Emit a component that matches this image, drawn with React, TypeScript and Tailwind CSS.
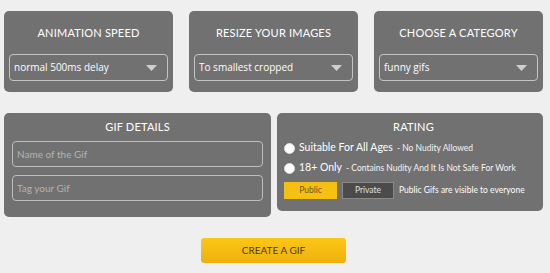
import React from 'react';

const font = { fontFamily: 'Lato, "Open Sans", sans-serif' };

function SelectBox({ value }: { value: string }) {
  return (
    <div className="flex h-[27px] items-center justify-between rounded-[4px] border border-[#c4c4c4] pl-[4px] pr-[10px]">
      <span className="text-[10px] text-white" style={{ fontFamily: '"Open Sans", sans-serif' }}>{value}</span>
      <svg width="11" height="6" viewBox="0 0 11 6">
        <polygon points="0,0 11,0 5.5,6" fill="#cfcfcf" />
      </svg>
    </div>
  );
}

function OptionPanel({ title, value }: { title: string; value: string }) {
  return (
    <div className="flex h-[81px] w-[169px] flex-col rounded-[5px] bg-[#717171] px-[5px] pt-[15px]">
      <h2 className="mb-[14px] text-center text-[11px] leading-[14px] tracking-[0.2px] text-white">{title}</h2>
      <SelectBox value={value} />
    </div>
  );
}

function RadioRow({ label, note }: { label: string; note: string }) {
  return (
    <div className="flex h-[14px] items-center gap-[4px]">
      <span className="h-[11px] w-[11px] rounded-full border border-[#ddd] bg-white" />
      <span className="text-[10.5px] text-white">{label}</span>
      <span className="text-[8.5px] text-[#f4f4f4]">- {note}</span>
    </div>
  );
}

export default function App() {
  return (
    <div className="min-h-[273px] bg-[#efefef] pt-[11px] pl-[4px]" style={font}>
      <div className="flex w-[539px] flex-col">
        <div className="flex gap-[16px]">
          <OptionPanel title="ANIMATION SPEED" value="normal 500ms delay" />
          <OptionPanel title="RESIZE YOUR IMAGES" value="To smallest cropped" />
          <OptionPanel title="CHOOSE A CATEGORY" value="funny gifs" />
        </div>

        <div className="mt-[21px] flex items-start gap-[6px]">
          <div className="flex h-[104px] w-[267px] flex-col rounded-[5px] bg-[#717171] px-[8px] pt-[7px]">
            <h2 className="mb-[7px] text-center text-[11px] leading-[14px] tracking-[0.2px] text-white">GIF DETAILS</h2>
            <input
              placeholder="Name of the Gif"
              className="mb-[8px] h-[26px] rounded-[4px] border border-[#bdbdbd] bg-transparent px-[4px] text-[10px] text-white outline-none placeholder:text-[#b3b3b3]"
            />
            <input
              placeholder="Tag your Gif"
              className="h-[26px] rounded-[4px] border border-[#bdbdbd] bg-transparent px-[4px] text-[10px] text-white outline-none placeholder:text-[#b3b3b3]"
            />
          </div>

          <div className="flex h-[98px] w-[266px] flex-col rounded-[5px] bg-[#717171] pl-[7px] pt-[7px]">
            <h2 className="mb-[7px] text-center text-[11px] leading-[14px] tracking-[0.2px] text-white">RATING</h2>
            <div className="flex flex-col gap-[6px]">
              <RadioRow label="Suitable For All Ages" note="No Nudity Allowed" />
              <RadioRow label="18+ Only" note="Contains Nudity And It Is Not Safe For Work" />
            </div>
            <div className="mt-[7px] flex items-center gap-[5px]">
              <button className="h-[17px] w-[53px] bg-[#f6c013] text-[8.5px] text-[#6b5410]">Public</button>
              <button className="h-[17px] w-[52px] border border-[#8a8a8a] bg-[#4b4b4b] text-[8.5px] text-[#e0e0e0]">Private</button>
              <span className="text-[8.5px] text-white">Public Gifs are visible to everyone</span>
            </div>
          </div>
        </div>

        <div className="mt-[21px] flex justify-center">
          <button className="h-[25px] w-[145px] rounded-[3px] bg-gradient-to-b from-[#fcc717] to-[#efb00d] text-[10px] text-[#4a3b0c]">
            CREATE A GIF
          </button>
        </div>
      </div>
    </div>
  );
}
